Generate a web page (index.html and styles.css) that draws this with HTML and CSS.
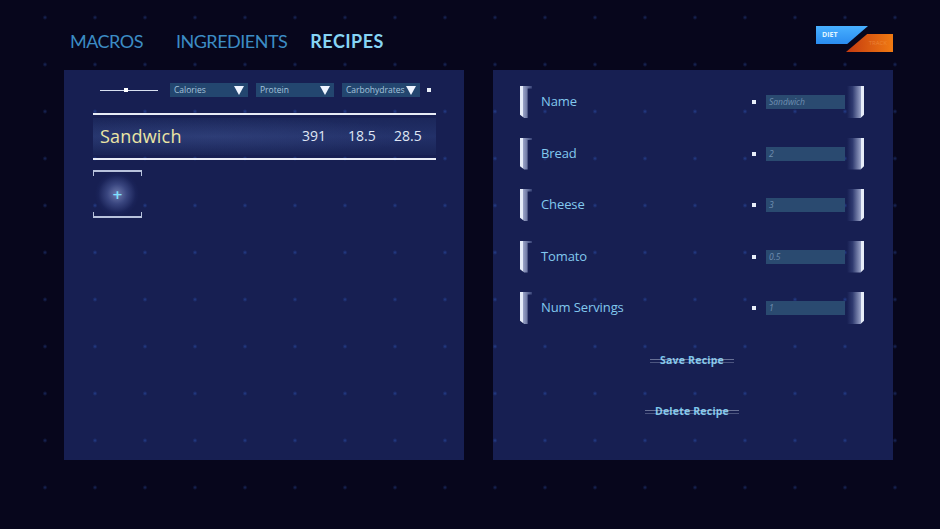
FILE: index.html
```html
<!DOCTYPE html>
<html lang="en">

<head>
    <meta charset="UTF-8">
    <title>Diet Tracker - Recipes</title>
    <link rel="stylesheet" href="styles.css">
</head>

<body>
    <header class="top">
        <nav class="tabs">
            <a class="tab">MACROS</a>
            <a class="tab">INGREDIENTS</a>
            <a class="tab active">RECIPES</a>
        </nav>
        <div class="logo">
            <span class="logo-blue">DIET</span>
            <span class="logo-orange">TRACK</span>
        </div>
    </header>

    <main class="panels">
        <section class="panel list-panel">
            <div class="toolbar">
                <div class="slider"><span class="knob"></span></div>
                <div class="select">Calories<span class="arrow"></span></div>
                <div class="select">Protein<span class="arrow"></span></div>
                <div class="select">Carbohydrates<span class="arrow"></span></div>
                <span class="pip"></span>
            </div>
            <div class="table">
                <div class="rule"></div>
                <div class="recipe-row">
                    <span class="recipe-name">Sandwich</span>
                    <span class="num">391</span>
                    <span class="num">18.5</span>
                    <span class="num">28.5</span>
                </div>
                <div class="rule"></div>
            </div>
            <button class="add-btn"><span class="glow"></span><span class="plus">+</span></button>
        </section>

        <section class="panel edit-panel">
            <div class="field">
                <span class="bracket left"></span>
                <span class="label">Name</span>
                <span class="pip"></span>
                <span class="input">Sandwich</span>
                <span class="bracket right"></span>
            </div>
            <div class="field">
                <span class="bracket left"></span>
                <span class="label">Bread</span>
                <span class="pip"></span>
                <span class="input">2</span>
                <span class="bracket right"></span>
            </div>
            <div class="field">
                <span class="bracket left"></span>
                <span class="label">Cheese</span>
                <span class="pip"></span>
                <span class="input">3</span>
                <span class="bracket right"></span>
            </div>
            <div class="field">
                <span class="bracket left"></span>
                <span class="label">Tomato</span>
                <span class="pip"></span>
                <span class="input">0.5</span>
                <span class="bracket right"></span>
            </div>
            <div class="field">
                <span class="bracket left"></span>
                <span class="label">Num Servings</span>
                <span class="pip"></span>
                <span class="input">1</span>
                <span class="bracket right"></span>
            </div>
            <div class="action"><button class="text-btn">Save Recipe</button></div>
            <div class="action"><button class="text-btn">Delete Recipe</button></div>
        </section>
    </main>
</body>

</html>
```

FILE: styles.css
```css
body {
    margin: 0;
    width: 940px;
    height: 529px;
    overflow: hidden;
    font-family: 'Open Sans', 'DejaVu Sans', sans-serif;
    background-color: #07061c;
    background-image: radial-gradient(circle, rgba(50, 90, 190, 0.4) 0, rgba(50, 90, 190, 0.15) 1.5px, transparent 2.5px);
    background-size: 50px 47px;
    background-position: 20px -6px;
}

.top {
    height: 70px;
    display: flex;
    justify-content: space-between;
    padding: 0 47px 0 70px;
    box-sizing: border-box;
}

.tabs {
    display: flex;
    gap: 23px;
    padding-top: 29px;
}

.tab {
    font-family: 'Lato', sans-serif;
    font-size: 18px;
    line-height: 24px;
    letter-spacing: -0.5px;
    color: #3c8cc4;
    cursor: pointer;
}

.tab:first-child {
    margin-right: 10px;
}

.tab.active {
    color: #86d4f4;
    font-weight: bold;
    letter-spacing: 0.5px;
}

.logo {
    position: relative;
    width: 77px;
    height: 26px;
    margin-top: 26px;
}

.logo-blue {
    position: absolute;
    left: 0;
    top: 0;
    width: 52px;
    height: 18px;
    background: linear-gradient(180deg, #48b0ff, #2a8cf0);
    clip-path: polygon(0 0, 100% 0, 60% 100%, 0 100%);
    color: #e0f4ff;
    font-size: 7px;
    font-weight: bold;
    line-height: 18px;
    padding-left: 6px;
    box-sizing: border-box;
}

.logo-orange {
    position: absolute;
    right: 0;
    top: 8px;
    width: 47px;
    height: 18px;
    background: linear-gradient(90deg, #c43a10, #f07a12);
    clip-path: polygon(45% 0, 100% 0, 100% 100%, 0 100%);
    color: rgba(255, 190, 120, 0.35);
    font-size: 6px;
    line-height: 18px;
    text-align: right;
    padding-right: 6px;
    box-sizing: border-box;
}

.panels {
    display: flex;
    gap: 29px;
    padding-left: 64px;
}

.panel {
    width: 400px;
    height: 390px;
    box-sizing: border-box;
    background-color: #171f52;
    background-image: radial-gradient(circle, rgba(50, 100, 210, 0.45) 0, rgba(50, 100, 210, 0.15) 1.5px, transparent 2.5px);
    background-size: 50px 47px;
    background-position: 20px -6px;
    background-attachment: fixed;
}

/* left panel */
.list-panel {
    padding: 13px 0 0 29px;
}

.toolbar {
    display: flex;
    align-items: center;
    height: 14px;
    padding-left: 7px;
}

.slider {
    position: relative;
    width: 58px;
    height: 1px;
    background: #d8e0f0;
    margin-right: 12px;
}

.knob {
    position: absolute;
    left: 24px;
    top: -1.5px;
    width: 4px;
    height: 4px;
    background: #fff;
}

.select {
    position: relative;
    width: 78px;
    height: 14px;
    background: #23466f;
    color: #a6c4dc;
    font-size: 8.5px;
    line-height: 14px;
    padding-left: 4px;
    box-sizing: border-box;
    margin-right: 8px;
}

.arrow {
    position: absolute;
    right: 4px;
    top: 3px;
    width: 0;
    height: 0;
    border-left: 5px solid transparent;
    border-right: 5px solid transparent;
    border-top: 9px solid #eef4ff;
}

.pip {
    width: 4px;
    height: 4px;
    background: #e8eef8;
    flex: none;
}

.list-panel .pip {
    margin-left: -1px;
}

.table {
    width: 343px;
    margin-top: 16px;
}

.rule {
    height: 2px;
    background: #e8ecf6;
}

.recipe-row {
    display: flex;
    align-items: center;
    height: 37px;
    margin: 3px 0;
    background:
        radial-gradient(ellipse at 35% 50%, rgba(70, 90, 150, 0.3), transparent 70%),
        linear-gradient(180deg, rgba(30, 44, 96, 0.6), rgba(38, 54, 112, 0.75) 50%, rgba(28, 40, 90, 0.6));
    padding-left: 7px;
}

.recipe-name {
    flex: 1;
    font-size: 18px;
    color: #ece6a4;
    letter-spacing: 0.2px;
    margin-top: -2px;
}

.num {
    font-size: 14px;
    color: #dfe6f4;
    width: 46px;
    text-align: left;
    margin-top: -2px;
}

.num:last-child {
    width: 42px;
}

.add-btn {
    position: relative;
    display: block;
    margin-top: 10px;
    width: 49px;
    height: 48px;
    border: none;
    padding: 0;
    background: transparent;
    border-top: 2px solid #b8c2dc;
    border-bottom: 2px solid #b8c2dc;
    cursor: pointer;
}

.add-btn::before,
.add-btn::after {
    content: "";
    position: absolute;
    left: 0;
    right: 0;
    height: 4px;
    border-left: 1px solid #b8c2dc;
    border-right: 1px solid #b8c2dc;
}

.add-btn::before {
    top: 0;
}

.add-btn::after {
    bottom: 0;
}

.glow {
    position: absolute;
    left: 0;
    top: 0;
    width: 48px;
    height: 44px;
    background: radial-gradient(circle closest-side, rgba(170, 185, 235, 0.6) 0, rgba(120, 140, 210, 0.35) 45%, rgba(60, 80, 160, 0.08) 85%, transparent 100%);
}

.plus {
    position: relative;
    color: #7fe0ff;
    font-size: 13px;
    font-weight: bold;
    font-family: 'DejaVu Sans', sans-serif;
    line-height: 1;
}

/* right panel */
.edit-panel {
    padding: 16px 29px 0 27px;
    display: flex;
    flex-direction: column;
    gap: 19.5px;
}

.field {
    display: flex;
    align-items: center;
    height: 32px;
}

.bracket {
    width: 17px;
    height: 32px;
    flex: none;
}

.bracket.left {
    border-left: 3px solid #e6ecf8;
    background: linear-gradient(90deg, rgba(200, 210, 240, 0.75), rgba(120, 140, 200, 0.25) 70%, transparent);
    clip-path: polygon(0 0, 70% 0, 70% 8%, 45% 8%, 45% 100%, 25% 100%, 0 90%);
    box-sizing: border-box;
}

.bracket.right {
    border-right: 3px solid #e6ecf8;
    background: linear-gradient(270deg, rgba(200, 210, 240, 0.75), rgba(120, 140, 200, 0.25) 60%, transparent);
    clip-path: polygon(0 0, 100% 0, 100% 90%, 80% 100%, 0 100%);
    box-sizing: border-box;
    margin-left: 2px;
}

.label {
    flex: 1;
    margin-left: 4px;
    margin-top: -2px;
    font-size: 13px;
    letter-spacing: -0.1px;
    color: #82c8ee;
}

.edit-panel .pip {
    width: 4px;
    height: 4px;
    margin-right: 10px;
}

.input {
    width: 79px;
    height: 14px;
    background: #2a4a70;
    color: #6f8fb0;
    font-size: 8.5px;
    font-style: italic;
    line-height: 14px;
    padding-left: 3px;
    box-sizing: border-box;
}

.action {
    height: 32px;
    display: flex;
    align-items: center;
    justify-content: center;
}

.text-btn {
    position: relative;
    background: none;
    border: none;
    padding: 0 10px;
    font-family: 'Open Sans', sans-serif;
    font-size: 10.5px;
    font-weight: bold;
    letter-spacing: 0.2px;
    color: #7ec6ea;
    cursor: pointer;
}

.text-btn::after {
    content: "";
    position: absolute;
    left: 0;
    right: 0;
    top: 50%;
    height: 2px;
    margin-top: -1px;
    border-top: 1px solid rgba(200, 210, 230, 0.45);
    border-bottom: 1px solid rgba(200, 210, 230, 0.3);
}
```
